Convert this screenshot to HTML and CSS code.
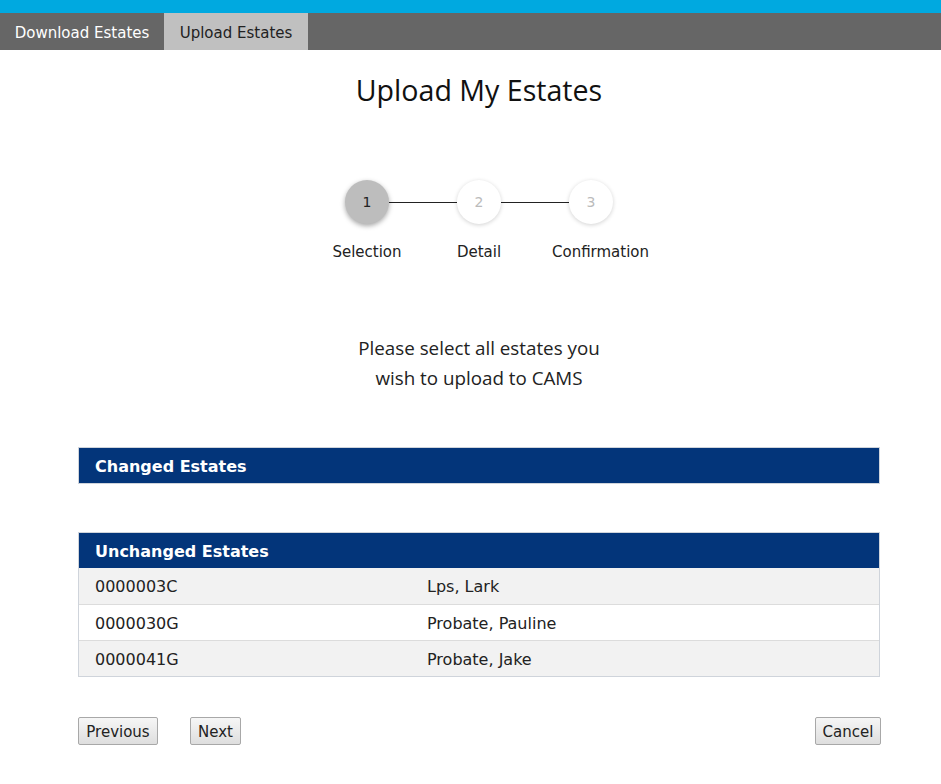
FILE: index.html
```html
<!DOCTYPE html>
<html>
<head>
<meta charset="utf-8">
<link rel="stylesheet" href="styles.css">
</head>
<body>
<div class="topbar"></div>
<nav class="tabs">
  <div class="tab tab-download">Download Estates</div>
  <div class="tab tab-upload">Upload Estates</div>
</nav>
<main class="main">
  <h1 class="title">Upload My Estates</h1>
  <div class="stepper">
    <div class="step step-active">
      <div class="circle">1</div>
      <div class="label">Selection</div>
    </div>
    <div class="step">
      <div class="circle">2</div>
      <div class="label">Detail</div>
    </div>
    <div class="step step-last">
      <div class="circle">3</div>
      <div class="label">Confirmation</div>
    </div>
  </div>
  <p class="intro">Please select all estates you<br>wish to upload to CAMS</p>

  <section class="panel panel-changed">
    <div class="panel-head">Changed Estates</div>
  </section>

  <section class="panel">
    <div class="panel-head">Unchanged Estates</div>
    <div class="row row-alt"><div class="cell">0000003C</div><div class="cell">Lps, Lark</div></div>
    <div class="row"><div class="cell">0000030G</div><div class="cell">Probate, Pauline</div></div>
    <div class="row row-alt"><div class="cell">0000041G</div><div class="cell">Probate, Jake</div></div>
  </section>

  <div class="actions">
    <div class="left-actions">
      <button class="btn btn-prev">Previous</button>
      <button class="btn btn-next">Next</button>
    </div>
    <button class="btn btn-cancel">Cancel</button>
  </div>
</main>
</body>
</html>
```
FILE: styles.css
```css
html, body {
  margin: 0;
  padding: 0;
  background: #fff;
}
body {
  font-family: "DejaVu Sans", Verdana, sans-serif;
  color: #222;
}
.topbar {
  height: 13px;
  background: #00a9e0;
}
.tabs {
  display: flex;
  height: 37px;
  background: #666666;
}
.tab {
  box-sizing: border-box;
  height: 37px;
  padding-top: 2px;
  line-height: 37px;
  font-size: 15px;
  text-align: center;
  overflow: hidden;
}
.tab-download {
  width: 164px;
  color: #fff;
}
.tab-upload {
  width: 144px;
  background: #c0c0c0;
  color: #222;
}
.main {
  margin-left: 78px;
  width: 802px;
  padding-top: 20px;
  padding-bottom: 30px;
}
.title {
  margin: 0;
  height: 40px;
  line-height: 40px;
  text-align: center;
  font-family: "Open Sans", "Noto Sans", sans-serif;
  font-weight: 400;
  font-size: 28.6px;
  color: #111;
}
.stepper {
  display: flex;
  justify-content: center;
  margin-top: 70px;
}
.step {
  width: 112px;
  display: flex;
  flex-direction: column;
  align-items: center;
  position: relative;
}
.step + .step::before {
  content: "";
  position: absolute;
  top: 22px;
  left: -34px;
  width: 68px;
  height: 1px;
  background: #222;
}
.circle {
  width: 44px;
  height: 44px;
  border-radius: 50%;
  background: #fff;
  box-shadow: 0 1px 4px rgba(0,0,0,0.18);
  color: #bbb;
  font-size: 14px;
  line-height: 44px;
  text-align: center;
  position: relative;
  z-index: 1;
}
.step-active .circle {
  background: #bdbdbd;
  color: #222;
  box-shadow: 0 2px 5px rgba(0,0,0,0.35);
}
.label {
  margin-top: 18px;
  line-height: 20px;
  font-size: 15px;
  color: #222;
  white-space: nowrap;
}
.step-last .label {
  margin-left: 19px;
}
.intro {
  margin: 71px 0 0;
  text-align: center;
  font-family: "Open Sans", "Noto Sans", sans-serif;
  font-size: 18.8px;
  line-height: 30px;
  color: #222;
}
.panel {
  border: 1px solid #cfd4db;
  margin-top: 48px;
}
.panel-changed {
  margin-top: 54px;
}
.panel-head {
  box-sizing: border-box;
  background: #03357a;
  color: #fff;
  font-weight: bold;
  font-size: 16px;
  height: 35px;
  padding-top: 2px;
  line-height: 33px;
  padding-left: 16px;
}
.row {
  box-sizing: border-box;
  display: grid;
  grid-template-columns: 332px 1fr;
  height: 36px;
  padding-top: 2px;
  line-height: 33px;
  border-top: 1px solid #dcdcdc;
  font-size: 16px;
  background: #fff;
}
.panel-head + .row {
  border-top: 0;
  line-height: 34px;
}
.row-alt {
  background: #f2f2f2;
}
.cell {
  padding-left: 16px;
}
.actions {
  display: flex;
  justify-content: space-between;
  margin-top: 40px;
  margin-right: -1px;
}
.left-actions {
  display: flex;
  gap: 32px;
}
.btn {
  box-sizing: border-box;
  font-family: "DejaVu Sans", Verdana, sans-serif;
  font-size: 15px;
  color: #222;
  height: 28px;
  padding: 1px 0 0;
  border: 1px solid #a8a8a8;
  border-radius: 2px;
  background: linear-gradient(#f6f6f6, #dedede);
  text-align: center;
}
.btn-prev {
  width: 80px;
}
.btn-next {
  width: 51px;
}
.btn-cancel {
  width: 66px;
}
```
